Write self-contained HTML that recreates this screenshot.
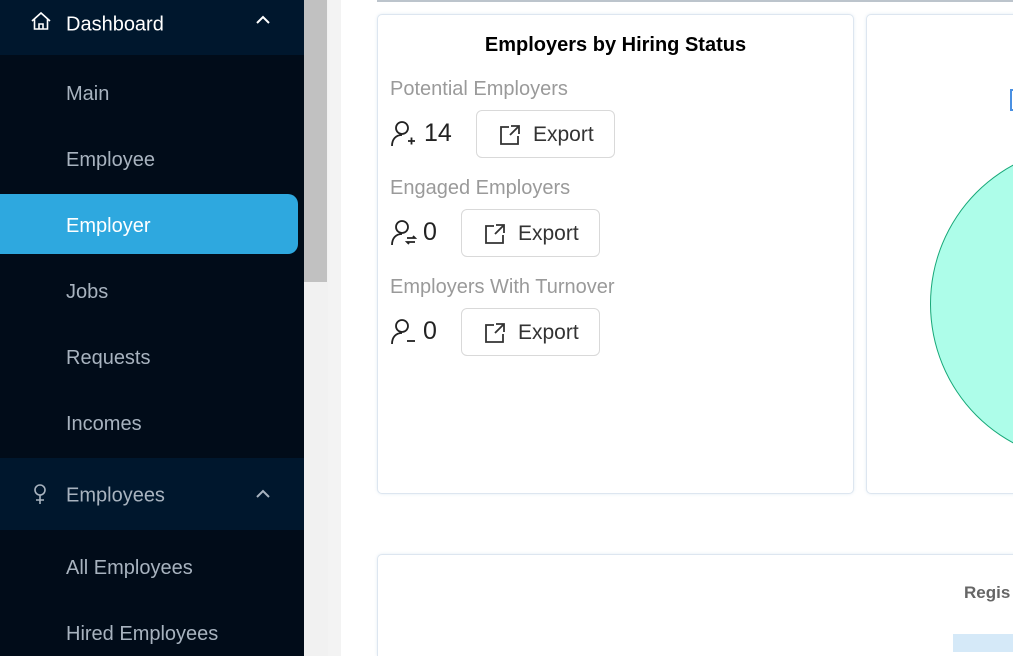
<!DOCTYPE html>
<html style="width:1013px;height:656px;overflow:hidden"><head><meta charset="utf-8"><style>
*{margin:0;padding:0;box-sizing:border-box}
body{width:1013px;height:656px;overflow:hidden;position:relative;background:#fff;font-family:"Liberation Sans",sans-serif}
.sb{position:absolute;left:0;top:0;width:304px;height:656px;background:#010c19}
.hd{position:absolute;left:0;width:304px;height:72px;background:#00172d;color:#fff;font-size:20px}
.hd span{position:absolute;left:66px;top:50%;transform:translateY(-50%)}
.it{position:absolute;left:66px;font-size:20px;color:#a8b3bf}
.act{position:absolute;left:0;top:194px;width:298px;height:60px;background:#2ea8df;border-radius:0 10px 10px 0}
.scr{position:absolute;left:304px;top:0;width:24px;height:656px;background:#f1f1f1}
.thumb{position:absolute;left:304px;top:0;width:23px;height:282px;background:#c1c1c1}
.gut{position:absolute;left:328px;top:0;width:13px;height:656px;background:#f3f3f3}
.card{position:absolute;background:#fff;border:1px solid #dde6f0;border-radius:5px;box-shadow:0 0 3px rgba(120,160,200,.2)}
.lbl{position:absolute;left:12px;font-size:20px;color:#9a9a9a}
.num{position:absolute;font-size:25px;color:#222}
.btn{position:absolute;height:48px;border:1px solid #d9d9d9;border-radius:6px;font-size:21px;color:#333;background:#fff}
.btn span{position:absolute;left:56px;top:12px}
.btn svg{position:absolute;left:22px;top:13px}
</style></head><body>
<div class="sb"></div>
<div class="hd" style="top:-16px;height:71px"><span style="top:58%">Dashboard</span>
<svg style="position:absolute;left:30px;top:26px" width="22" height="22" viewBox="0 0 22 22" fill="none" stroke="#fff" stroke-width="1.6"><path d="M2 11L11 3l9 8M4.5 9v10h13V9M9 19v-5h4v5"/></svg>
<svg style="position:absolute;left:256px;top:31px" width="14" height="10" viewBox="0 0 14 10" fill="none" stroke="#fff" stroke-width="2"><path d="M1 8l6-6 6 6"/></svg></div>
<div class="it" style="top:83px">Main</div>
<div class="it" style="top:149px">Employee</div>
<div class="act"></div>
<div class="it" style="top:215px;color:#fff">Employer</div>
<div class="it" style="top:281px">Jobs</div>
<div class="it" style="top:347px">Requests</div>
<div class="it" style="top:413px">Incomes</div>
<div class="hd" style="top:458px;color:#a8b3bf"><span style="top:53%">Employees</span>
<svg style="position:absolute;left:32px;top:26px" width="16" height="22" viewBox="0 0 16 22" fill="none" stroke="#a8b3bf" stroke-width="1.6"><circle cx="8" cy="6" r="5"/><path d="M8 11v9M4 16h8"/></svg>
<svg style="position:absolute;left:256px;top:31px" width="14" height="10" viewBox="0 0 14 10" fill="none" stroke="#a8b3bf" stroke-width="2"><path d="M1 8l6-6 6 6"/></svg></div>
<div class="it" style="top:557px">All Employees</div>
<div class="it" style="top:623px">Hired Employees</div>
<div class="scr"></div><div class="thumb"></div><div class="gut"></div>
<div style="position:absolute;left:377px;top:0;width:636px;height:2px;background:#bcc4cc"></div>
<div class="card" style="left:377px;top:14px;width:477px;height:480px">
<div style="position:absolute;left:0;width:100%;top:19px;text-align:center;font-size:20px;color:#000;font-weight:bold">Employers by Hiring Status</div>
<div class="lbl" style="top:63px">Potential Employers</div>
<svg style="position:absolute;left:12px;top:104px" width="28" height="30" viewBox="0 0 28 30" fill="none" stroke="#222" stroke-width="1.8"><circle cx="12" cy="9" r="6"/><path d="M2 27c0-7 4-11 10-11"/><path d="M18 22h7M21.5 18.5v7"/></svg>
<div class="num" style="left:46px;top:104px">14</div>
<div class="btn" style="left:98px;top:95px;width:139px"><svg width="22" height="22" viewBox="0 0 22 22" fill="none" stroke="#333" stroke-width="1.8"><path d="M10 3H2v17h17v-8M12 2h8v8M20 2l-9 9"/></svg><span>Export</span></div>
<div class="lbl" style="top:162px">Engaged Employers</div>
<svg style="position:absolute;left:12px;top:203px" width="28" height="30" viewBox="0 0 28 30" fill="none" stroke="#222" stroke-width="1.8"><circle cx="12" cy="9" r="6"/><path d="M2 27c0-7 4-11 10-11"/><path d="M17 20h8l-2-2M25 24h-8l2 2"/></svg>
<div class="num" style="left:45px;top:203px">0</div>
<div class="btn" style="left:83px;top:194px;width:139px"><svg width="22" height="22" viewBox="0 0 22 22" fill="none" stroke="#333" stroke-width="1.8"><path d="M10 3H2v17h17v-8M12 2h8v8M20 2l-9 9"/></svg><span>Export</span></div>
<div class="lbl" style="top:261px">Employers With Turnover</div>
<svg style="position:absolute;left:12px;top:302px" width="28" height="30" viewBox="0 0 28 30" fill="none" stroke="#222" stroke-width="1.8"><circle cx="12" cy="9" r="6"/><path d="M2 27c0-7 4-11 10-11"/><path d="M17 24h8"/></svg>
<div class="num" style="left:45px;top:302px">0</div>
<div class="btn" style="left:83px;top:293px;width:139px"><svg width="22" height="22" viewBox="0 0 22 22" fill="none" stroke="#333" stroke-width="1.8"><path d="M10 3H2v17h17v-8M12 2h8v8M20 2l-9 9"/></svg><span>Export</span></div>
</div>
<div class="card" style="left:866px;top:14px;width:170px;height:480px;overflow:hidden">
<div style="position:absolute;left:143px;top:74px;width:6px;height:22px;border:2px solid #4a90e2;border-right:none"></div>
<div style="position:absolute;left:63px;top:131px;width:314px;height:316px;border-radius:50%;background:#adfde9;border:1.5px solid #17a878"></div>
</div>
<div class="card" style="left:377px;top:554px;width:660px;height:102px;border-bottom:none;border-radius:5px 5px 0 0">
<div style="position:absolute;left:586px;top:28px;font-size:17px;font-weight:bold;color:#666">Regis</div>
<div style="position:absolute;left:575px;top:79px;width:90px;height:18px;background:#d5e9f8"></div>
</div>
</body></html>
